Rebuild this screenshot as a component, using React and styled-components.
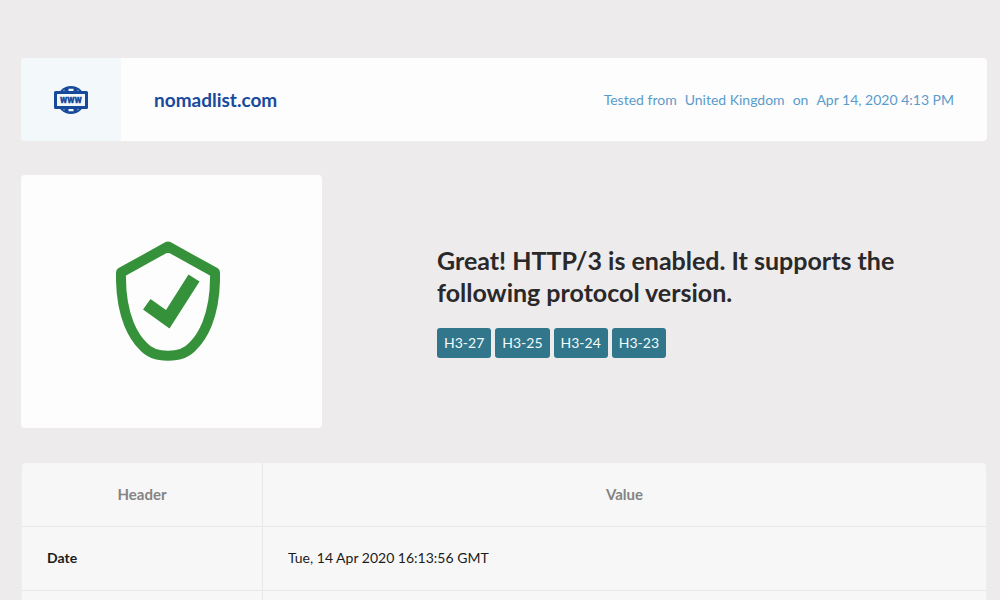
import React from 'react'
import styled, { createGlobalStyle } from 'styled-components'

const protocols = ['H3-27', 'H3-25', 'H3-24', 'H3-23']

const headers = [
  { name: 'Date', value: 'Tue, 14 Apr 2020 16:13:56 GMT' },
  { name: '', value: '' }
]

const WwwIcon = () => (
  <svg width='34' height='28' viewBox='0 0 34 28' aria-hidden='true'>
    <circle cx='17' cy='14' r='14' fill='#184a9c' />
    <path d='M14.5 2.8h5v2.4h-5zM14.5 22.8h5v2.4h-5z' fill='#f3f8fb' />
    <path d='M9.5 4.2l1 .8M24.5 4.2l-1 .8M9.5 23.8l1 -.8M24.5 23.8l-1 -.8' stroke='#7f9fcb' strokeWidth='1.5' />
    <rect x='1.5' y='6.5' width='31' height='15' fill='#f3f8fb' stroke='#184a9c' strokeWidth='3' strokeLinejoin='round' />
    <text
      x='17'
      y='17'
      textAnchor='middle'
      fontFamily='Roboto, sans-serif'
      fontSize='10'
      fontWeight='900'
      fill='#184a9c'
      stroke='#184a9c'
      strokeWidth='0.3'
    >
      www
    </text>
  </svg>
)

const ShieldIcon = () => (
  <svg width='104' height='120' viewBox='0 0 104 120' role='img' aria-label='Enabled'>
    <path
      d='M52 5.5L99 31.5C100 78 84 98 77 105C66 118 38 118 27 105C20 98 4 78 5 31.5Z'
      fill='none'
      stroke='#35923a'
      strokeWidth='10'
      strokeLinejoin='round'
    />
    <path d='M34.5 58L50 69L72.5 33.5L83.5 40.5L53.5 87.5L27 68.5Z' fill='#35923a' />
  </svg>
)

const App = () => (
  <>
    <GlobalStyle />
    <S.Page>
      <S.Summary>
        <S.SiteIcon>
          <WwwIcon />
        </S.SiteIcon>
        <S.Domain>nomadlist.com</S.Domain>
        <S.TestInfo>
          <span>Tested from</span>
          <span>United Kingdom</span>
          <span>on</span>
          <time dateTime='2020-04-14T16:13'>Apr 14, 2020 4:13 PM</time>
        </S.TestInfo>
      </S.Summary>

      <S.Result>
        <S.Status>
          <ShieldIcon />
        </S.Status>
        <S.Message>
          <S.Title>Great! HTTP/3 is enabled. It supports the following protocol version.</S.Title>
          <S.Badges>
            {protocols.map((item) => <S.Badge key={item}>{item}</S.Badge>)}
          </S.Badges>
        </S.Message>
      </S.Result>

      <S.Table>
        <thead>
          <tr>
            <S.Head $width='25%'>Header</S.Head>
            <S.Head>Value</S.Head>
          </tr>
        </thead>
        <tbody>
          {headers.map((item, index) => (
            <tr key={index}>
              <S.Cell $strong>{item.name}</S.Cell>
              <S.Cell>{item.value}</S.Cell>
            </tr>
          ))}
        </tbody>
      </S.Table>
    </S.Page>
  </>
)

const GlobalStyle = createGlobalStyle`
  * {
    box-sizing: border-box;
  }

  body {
    margin: 0;
    font-family: Lato, 'Open Sans', sans-serif;
    font-size: 14px;
    line-height: 20px;
    color: #1c1c1c;
    background: #edebec;
  }
`

const S = {
  Page: styled.main`
    display: flex;
    flex-direction: column;
    gap: 34px;
    padding: 58px 13px 0 21px;
  `,
  Summary: styled.header`
    display: flex;
    align-items: stretch;
    min-height: 83px;
    overflow: hidden;
    background: #fdfdfd;
    border-radius: 4px;
  `,
  SiteIcon: styled.div`
    display: flex;
    flex: 0 0 100px;
    align-items: center;
    justify-content: center;
    background: #f3f8fb;
  `,
  Domain: styled.h1`
    flex: 1;
    align-self: center;
    margin: 0;
    padding: 0 33px;
    font-size: 19px;
    line-height: 24px;
    font-weight: 700;
    color: #184a9c;
  `,
  TestInfo: styled.p`
    display: flex;
    flex-wrap: wrap;
    align-self: center;
    gap: 8px;
    margin: 0;
    padding-right: 33px;
    color: #5a9bcb;
  `,
  Result: styled.section`
    display: flex;
    align-items: center;
  `,
  Status: styled.div`
    display: flex;
    flex: 0 0 301px;
    align-items: center;
    justify-content: center;
    padding: 66px 8px 67px 0;
    background: #fdfdfd;
    border-radius: 4px;
  `,
  Message: styled.div`
    flex: 1;
    padding: 0 80px 2px 115px;
  `,
  Title: styled.h2`
    margin: 0;
    font-size: 25px;
    line-height: 32px;
    font-weight: 700;
    color: #2a2829;
  `,
  Badges: styled.ul`
    display: flex;
    flex-wrap: wrap;
    gap: 4px;
    margin: 20px 0 0;
    padding: 0;
    list-style: none;
  `,
  Badge: styled.li`
    min-width: 54px;
    padding: 5px 7px;
    text-align: center;
    color: #f4fafb;
    background: #31768b;
    border-radius: 3px;
  `,
  Table: styled.table`
    width: 100%;
    overflow: hidden;
    border-spacing: 0;
    background: #f7f7f7;
    border: 1px solid #ececec;
    border-radius: 4px;
  `,
  Head: styled.th`
    width: ${({ $width }) => $width || 'auto'};
    height: 64px;
    padding: 0 25px 2px;
    font-size: 15px;
    font-weight: 700;
    color: #848484;
    border-bottom: 1px solid #e8e8e8;

    &:first-child {
      border-right: 1px solid #e8e8e8;
    }
  `,
  Cell: styled.td`
    height: 64px;
    padding: 0 25px 2px;
    font-weight: ${({ $strong }) => $strong ? 700 : 400};
    border-bottom: 1px solid #e8e8e8;

    &:first-child {
      border-right: 1px solid #e8e8e8;
    }
  `
}

export default App
